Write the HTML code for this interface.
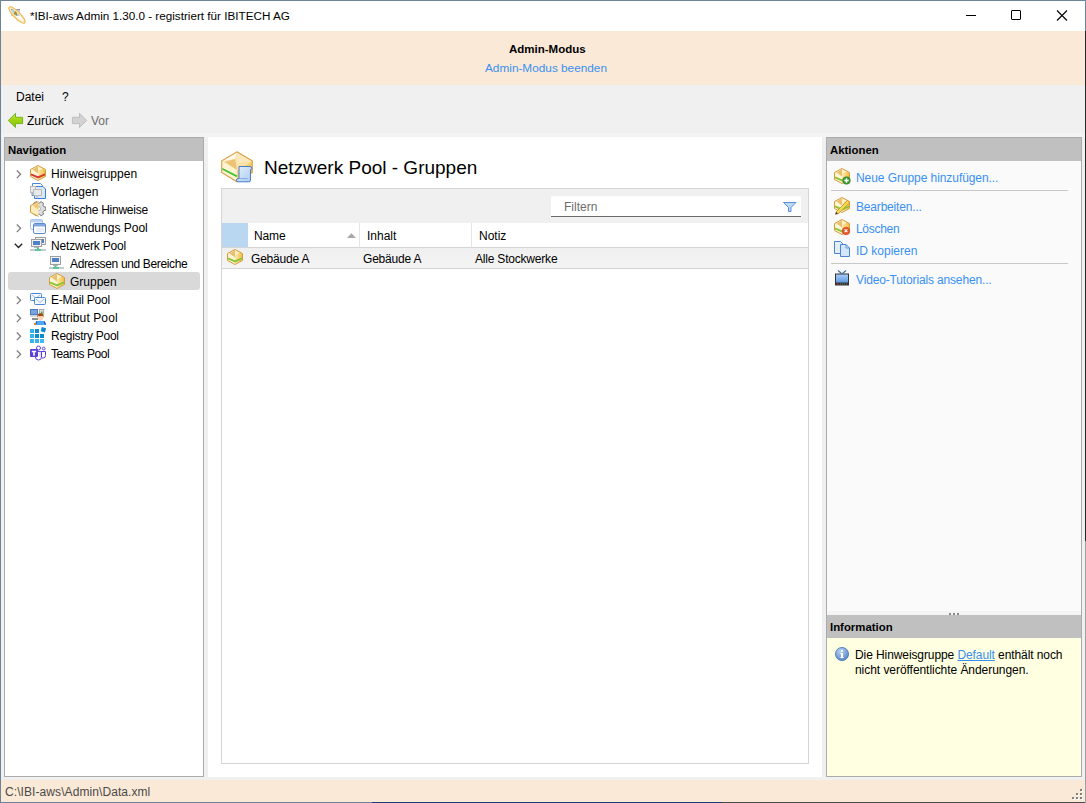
<!DOCTYPE html>
<html><head><meta charset="utf-8">
<style>
*{margin:0;padding:0;box-sizing:border-box}
html,body{width:1086px;height:803px;overflow:hidden;background:#f0f0f0;font-family:"Liberation Sans",sans-serif;font-size:12px;color:#000}
div,svg{position:absolute}
.t{white-space:nowrap;line-height:14px;height:14px}
.b{font-weight:bold}
.h{font-weight:bold;font-size:11.4px}
.lk{color:#3990f3}
.bx{background:#fff}
svg{overflow:visible}
</style></head><body>
<svg width="0" height="0" style="left:0;top:0">
<defs>
 <linearGradient id="gR" x1="0" y1="0" x2="1" y2="0"><stop offset="0" stop-color="#fde9b4"/><stop offset="1" stop-color="#f2bd3e"/></linearGradient>
 <linearGradient id="gBl" x1="0" y1="0" x2="0" y2="1"><stop offset="0" stop-color="#a9cdf5"/><stop offset="1" stop-color="#5f9be6"/></linearGradient>
 <linearGradient id="gGreen" x1="0" y1="0" x2="0" y2="1"><stop offset="0" stop-color="#c0e85a"/><stop offset=".5" stop-color="#9dd40c"/><stop offset="1" stop-color="#86c010"/></linearGradient>
 <radialGradient id="gInfo" cx=".4" cy=".3" r=".8"><stop offset="0" stop-color="#b9d2f0"/><stop offset="1" stop-color="#4b7fc4"/></radialGradient>
 <symbol id="boxb" viewBox="0 0 16 16">
  <path d="M8 .5 15.5 4.5V11.5L8 15.5 .5 11.5V4.5Z" fill="#fff6d8"/>
  <path d="M8 1 15.2 4.7V11.3L8 15.1V8.4Z" fill="url(#gR)"/>
  <path d="M2.5 4.6 8 1.2 8 8.4Z" fill="#e8c070"/>
  <path d="M8 1.2 13 3.8 8 6Z" fill="#fff1c8"/>
 </symbol>
 <symbol id="boxR" viewBox="0 0 16 16">
  <use href="#boxb"/>
  <path d="M1 9.3 8 12.5 15 9.3" fill="none" stroke="#d6392b" stroke-width="2"/>
  <path d="M8 .5 15.5 4.5V11.5L8 15.5 .5 11.5V4.5Z" fill="none" stroke="#d49b3b"/>
 </symbol>
 <symbol id="boxG" viewBox="0 0 16 16">
  <use href="#boxb"/>
  <path d="M1 9.3 8 12.5 15 9.3" fill="none" stroke="#8dc63a" stroke-width="2"/>
  <path d="M8 .5 15.5 4.5V11.5L8 15.5 .5 11.5V4.5Z" fill="none" stroke="#d49b3b"/>
 </symbol>
 <symbol id="vorl" viewBox="0 0 16 16">
  <path d="M2.5.5h8l2 2v10h-10.5z" fill="#f4f8fe" stroke="#4a86d4"/>
  <path d="M4.5 3.5h8.5l2.5 2.5v9.5h-11z" fill="#d9e9fb" stroke="#3d7ed2"/>
  <rect x=".5" y="3.5" width="5" height="6" fill="#ebebeb" stroke="#bcbcbc"/>
  <path d="M3.5 6.5h8v6h-3.5l-1 2v-2h-3.5z" fill="#e9e9e9" stroke="#b8b8b8"/>
 </symbol>
 <symbol id="stat" viewBox="0 0 16 16">
  <g transform="translate(.6 -.3)"><path d="M13.27 6.10 L15.21 6.34 L15.21 9.66 L13.27 9.90 L12.28 11.61 L13.05 13.41 L10.16 15.08 L8.98 13.51 L7.02 13.51 L5.84 15.08 L2.95 13.41 L3.72 11.61 L2.73 9.90 L0.79 9.66 L0.79 6.34 L2.73 6.10 L3.72 4.39 L2.95 2.59 L5.84 0.92 L7.02 2.49 L8.98 2.49 L10.16 0.92 L13.05 2.59 L12.28 4.39Z" fill="#dedede" stroke="#6e6e6e" stroke-width=".9"/>
  <circle cx="8" cy="8" r="2" fill="#fff" stroke="#8a8a8a" stroke-width=".6"/></g>
  <path d="M8.5 .6 .5 4.6V11.4L8.5 15.4Z" fill="#fcecc0"/>
  <path d="M8.5 1.5 3 4.6 8.5 9Z" fill="#f0c872"/>
  <path d="M8.5 .6 .5 4.6V11.4L8.5 15.4" fill="none" stroke="#d49b3b"/>
 </symbol>
 <symbol id="anw" viewBox="0 0 16 16">
  <rect x=".5" y=".5" width="12" height="10" rx="1.5" fill="#fff" stroke="#a8c4ea"/>
  <rect x="1" y="1" width="11" height="2.5" fill="#bdd3f1"/>
  <rect x="3.5" y="4.5" width="12" height="10" rx="1.5" fill="#fff" stroke="#5a89d0"/>
  <rect x="4" y="5" width="11" height="2.5" fill="#80a8e2"/>
  <rect x="6" y="9" width="8" height="4" fill="#e8eff9"/>
 </symbol>
 <symbol id="net" viewBox="0 0 16 16">
  <rect x="5.5" y=".5" width="10" height="7" fill="#f2f2f2" stroke="#a0a0a0"/>
  <rect x="11" y="2" width="3" height="4" fill="#4f80c8"/>
  <rect x="1.5" y="2.5" width="10" height="7" fill="#f2f2f2" stroke="#a0a0a0"/>
  <rect x="3" y="4" width="7" height="4" fill="#4f80c8"/>
  <rect x="4" y="10" width="5" height="1" fill="#b5b5b5"/>
  <rect x="7" y="10.5" width="2" height="2" fill="#4fc08d"/>
  <rect x="0" y="12" width="16" height="2" fill="#c5ccd1"/>
  <rect x="5" y="12" width="6" height="2" fill="#5bc595"/>
 </symbol>
 <symbol id="adr" viewBox="0 0 16 16">
  <rect x="1.5" y="1.5" width="10" height="8" fill="#f2f2f2" stroke="#a0a0a0"/>
  <rect x="3" y="3" width="7" height="4" fill="#4f80c8"/>
  <rect x="4" y="10" width="5" height="1" fill="#b5b5b5"/>
  <rect x="5.5" y="10.5" width="2" height="2" fill="#4fc08d"/>
  <rect x="0" y="12" width="15" height="2" fill="#c5ccd1"/>
  <rect x="4" y="12" width="6" height="2" fill="#5bc595"/>
 </symbol>
 <symbol id="mail" viewBox="0 0 16 16">
  <rect x=".5" y="2.5" width="11" height="7" rx=".8" fill="#f5f9ff" stroke="#4d88d6"/>
  <path d="M2 4 6 7 10 4" fill="none" stroke="#8fb3e4" stroke-width=".8"/>
  <rect x="4.5" y="6.5" width="11" height="7" rx=".8" fill="#f5f9ff" stroke="#4d88d6"/>
  <path d="M6 8 10 11.5 14 8" fill="none" stroke="#8fb3e4" stroke-width=".9"/>
 </symbol>
 <symbol id="attr" viewBox="0 0 16 16">
  <rect x="0" y="0" width="8" height="6" fill="#4a7bc4"/>
  <rect x="1" y="1" width="6" height="4" fill="#7ba4dc"/>
  <rect x="0" y="6" width="8" height="2" fill="#d8d8d8"/>
  <rect x="2" y="9" width="6" height="2" fill="#8c8c8c"/>
  <rect x="9.3" y=".3" width="4.5" height="5" fill="#dcdcdc" stroke="#8a8a8a" stroke-width=".6"/>
  <path d="M10.5 4.5 12 1.8 13 4.5Z" fill="#3fa23f"/>
  <path d="M5 16C5 12.5 7.5 11.8 10.5 11.8S16 12.5 16 16Z" fill="#4ea7f2"/>
  <path d="M5.5 15.5 7 12.2M15.5 15.5 14 12.2" stroke="#2747b8" stroke-width="1.1"/>
  <circle cx="10.5" cy="8.3" r="2.9" fill="#f7d6b5"/>
  <path d="M7.4 8.6C7 5.3 8.6 4.3 10.5 4.3S14 5.3 13.6 8.6L12.6 6.8 9.6 7.2 8.3 6.6Z" fill="#9a4a15"/>
  <rect x="4" y="14" width="2" height="2" fill="#e5852b"/>
 </symbol>
 <symbol id="reg" viewBox="0 0 16 16">
  <rect x="0" y="2" width="4" height="4" fill="#36b4ea"/>
  <rect x="5" y="2" width="4" height="4" fill="#0d8dd0"/>
  <rect x="0" y="7" width="4" height="4" fill="#36b4ea"/>
  <rect x="5" y="7" width="4" height="4" fill="#0d8dd0"/>
  <rect x="10" y="7" width="4" height="4" fill="#0d8dd0"/>
  <rect x="0" y="12" width="4" height="4" fill="#36b4ea"/>
  <rect x="5" y="12" width="4" height="4" fill="#36b4ea"/>
  <rect x="10" y="12" width="4" height="4" fill="#3dbcee"/>
  <rect x="11.2" y=".6" width="4.4" height="4.4" fill="#0b8ace" transform="rotate(15 13.4 2.8)"/>
 </symbol>
 <symbol id="teams" viewBox="0 0 16 16">
  <path d="M11 6.5h4.5v4.2a2.3 2.3 0 0 1-2.3 2.3H12" fill="none" stroke="#5b3fd9"/>
  <path d="M5.5 6.5h6v5.5a3 3 0 0 1-6 0z" fill="#fff" stroke="#5b3fd9"/>
  <path d="M10 6.7v5" stroke="#c9bdf2" stroke-width="1"/>
  <circle cx="8.5" cy="3" r="2" fill="#fff" stroke="#5b3fd9"/>
  <circle cx="13.7" cy="3.5" r="1.4" fill="#fff" stroke="#5b3fd9"/>
  <rect x="0" y="4" width="8" height="8" rx="1" fill="#5b3fd9"/>
  <path d="M1.8 5.8h4.4v1.5H4.8v3.5H3.2V7.3H1.8z" fill="#fff"/>
 </symbol>
 <symbol id="copy" viewBox="0 0 16 16">
  <path d="M.5 .5h6l3 3v9h-9z" fill="#e3eefb" stroke="#4a86d4"/>
  <path d="M6.5 3.5h5.5l3.5 3.5v8.5h-9z" fill="#d6e6fa" stroke="#4a86d4"/>
  <path d="M12 3.5V7h3.5" fill="none" stroke="#4a86d4" stroke-width=".8"/>
 </symbol>
 <symbol id="tv" viewBox="0 0 16 16">
  <path d="M4 .5 7.5 3.5M12 .5 8.5 3.5" stroke="#3b6ea0" stroke-width="1.1"/>
  <rect x="1" y="3.5" width="14" height="12" fill="#333"/>
  <rect x="2" y="4.5" width="12" height="8" fill="url(#gBl)"/>
  <rect x="3" y="13.5" width="1.5" height="1" fill="#e33"/>
  <path d="M6 14h1M8 14h1M10 14h1M12 14h1" stroke="#777" stroke-width="1"/>
 </symbol>
</defs>
</svg>

<!-- window frame -->
<div style="left:0;top:0;width:1086px;height:1px;background:#6c8499"></div>
<div style="left:0;top:0;width:1px;height:803px;background:#6c8499"></div>
<div style="left:0;top:802px;width:372px;height:1px;background:#6c8499"></div>
<div style="left:372px;top:802px;width:350px;height:1px;background:#1f3d72"></div>
<div style="left:722px;top:802px;width:364px;height:1px;background:#4a4a4a"></div>
<div style="left:1085px;top:0;width:1px;height:31px;background:#6c8499"></div>
<div style="left:1085px;top:31px;width:1px;height:510px;background:#262626"></div>
<div style="left:1085px;top:541px;width:1px;height:262px;background:#a0a0a0"></div>
<!-- title bar -->
<div style="left:1px;top:1px;width:1084px;height:30px;background:#fff"></div>
<div class="t" style="left:30px;top:9px;font-size:11.7px">*IBI-aws Admin 1.30.0 - registriert für IBITECH AG</div>
<!-- window controls -->
<div style="left:966px;top:15px;width:10px;height:1px;background:#000"></div>
<div style="left:1011px;top:10px;width:10px;height:10px;border:1px solid #000;border-radius:1px"></div>
<svg style="left:1056px;top:10px" width="12" height="11" viewBox="0 0 12 11"><path d="M1 0.5L11 10.5M11 0.5L1 10.5" stroke="#000" stroke-width="1.1"/></svg>
<!-- banner -->
<div style="left:1px;top:31px;width:1084px;height:54px;background:#fae9d6"></div>
<div class="t b" style="left:509px;top:42px;font-size:11.5px">Admin-Modus</div>
<div class="t lk" style="left:485px;top:61px;font-size:11.8px">Admin-Modus beenden</div>
<!-- menu / toolbar -->
<div class="t" style="left:16px;top:90px">Datei</div>
<div class="t" style="left:62px;top:90px">?</div>
<div class="t" style="left:27px;top:114px">Zurück</div>
<div class="t" style="left:91px;top:114px;color:#6d6d6d">Vor</div>

<div style="left:1px;top:133px;width:1084px;height:4px;background:#f3f3f3"></div>
<!-- left panel -->
<div style="left:4px;top:137px;width:200px;height:640px;border:1px solid #ababab;background:#fff"></div>
<div style="left:5px;top:138px;width:198px;height:23px;background:#c0c0c0"></div>
<div class="t h" style="left:8px;top:143px">Navigation</div>


<!-- nav items -->
<div class="t" style="left:51px;top:167px">Hinweisgruppen</div>
<div class="t" style="left:51px;top:185px">Vorlagen</div>
<div class="t" style="left:51px;top:203px;letter-spacing:-0.25px">Statische Hinweise</div>
<div class="t" style="left:51px;top:221px">Anwendungs Pool</div>
<div class="t" style="left:51px;top:239px;letter-spacing:-0.18px">Netzwerk Pool</div>
<div class="t" style="left:70px;top:257px;letter-spacing:-0.35px">Adressen und Bereiche</div>
<div style="left:8px;top:272px;width:192px;height:18px;background:#d9d9d9;border-radius:3px"></div>
<div class="t" style="left:70px;top:275px">Gruppen</div>
<div class="t" style="left:51px;top:293px;letter-spacing:-0.23px">E-Mail Pool</div>
<div class="t" style="left:51px;top:311px;letter-spacing:0.1px">Attribut Pool</div>
<div class="t" style="left:51px;top:329px;letter-spacing:-0.28px">Registry Pool</div>
<div class="t" style="left:51px;top:347px;letter-spacing:-0.44px">Teams Pool</div>

<!-- title icon -->
<svg style="left:6px;top:4px" width="22" height="22" viewBox="0 0 22 22">
 <rect x="5" y="5" width="9" height="7" fill="#b7d3f0"/><rect x="5" y="5" width="9" height="1" fill="#7d98b4"/>
 <path d="M8.2 11.5 9.5 7 10.8 11.5M8.8 10h1.6" fill="none" stroke="#a88a10" stroke-width="1.2"/>
 <ellipse cx="11" cy="11" rx="10.2" ry="2.6" transform="rotate(45 11 11)" fill="none" stroke="#fbe6b8" stroke-width="2"/>
 <ellipse cx="11" cy="11" rx="11" ry="3.3" transform="rotate(45 11 11)" fill="none" stroke="#efb84c" stroke-width="1"/>
</svg>
<!-- toolbar arrows -->
<svg style="left:0;top:100px" width="100" height="40" viewBox="0 100 100 40">
 <path d="M8.3 120.5 15.5 113.3V117.3H22.6V123.6H15.5V127.5Z" fill="url(#gGreen)" stroke="#6eae18" stroke-width=".9"/>
 <path d="M86.7 120.5 79.5 113.3V117.3H72.4V123.6H79.5V127.5Z" fill="#d2d2d2" stroke="#b9b9b9" stroke-width=".9"/>
</svg>
<!-- nav chevrons & icons -->
<svg style="left:0;top:160px" width="200" height="210" viewBox="0 160 200 210">
 <g fill="none" stroke="#808080" stroke-width="1.3">
  <path d="M16.8 170.5 20.6 174.3 16.8 178.1"/>
  <path d="M16.8 224.5 20.6 228.3 16.8 232.1"/>
  <path d="M16.8 296.5 20.6 300.3 16.8 304.1"/>
  <path d="M16.8 314.5 20.6 318.3 16.8 322.1"/>
  <path d="M16.8 332.5 20.6 336.3 16.8 340.1"/>
  <path d="M16.8 350.5 20.6 354.3 16.8 358.1"/>
 </g>
 <path d="M14.8 243.8 18.5 247.5 22.2 243.8" fill="none" stroke="#1e1e1e" stroke-width="1.3"/>
 <use href="#boxR" x="30" y="165" width="16" height="16"/>
 <use href="#vorl" x="30" y="183" width="16" height="16"/>
 <use href="#stat" x="30" y="201" width="16" height="16"/>
 <use href="#anw" x="30" y="219" width="16" height="16"/>
 <use href="#net" x="30" y="237" width="16" height="16"/>
 <use href="#adr" x="49" y="255" width="16" height="16"/>
 <use href="#boxG" x="49" y="273" width="16" height="16"/>
 <use href="#mail" x="30" y="291" width="16" height="16"/>
 <use href="#attr" x="30" y="309" width="16" height="16"/>
 <use href="#reg" x="30" y="327" width="16" height="16"/>
 <use href="#teams" x="30" y="345" width="16" height="16"/>
</svg>


<!-- center panel -->
<div style="left:208px;top:137px;width:614px;height:640px;background:#fff"></div>


<div class="t" style="left:264px;top:157px;font-size:19px;line-height:22px;height:22px">Netzwerk Pool - Gruppen</div>
<!-- grid -->
<div style="left:221px;top:188px;width:588px;height:576px;border:1px solid #d5d5d5;background:#fff"></div>
<div style="left:222px;top:189px;width:586px;height:34px;background:#f0f0f0"></div>
<div style="left:551px;top:196px;width:250px;height:21px;background:#fff;border-bottom:1px solid #6b6b6b;border-radius:2px 2px 0 0"></div>
<div class="t" style="left:564px;top:200px;color:#6d6d6d">Filtern</div>
<div style="left:222px;top:223px;width:26px;height:24px;background:#b9d7f0"></div>
<div style="left:359px;top:223px;width:1px;height:24px;background:#e5e5e5"></div>
<div style="left:471px;top:223px;width:1px;height:24px;background:#e5e5e5"></div>
<div style="left:222px;top:247px;width:586px;height:1px;background:#d5d5d5"></div>
<div class="t" style="left:254px;top:229px;letter-spacing:-0.15px">Name</div>
<div class="t" style="left:367px;top:229px">Inhalt</div>
<div class="t" style="left:479px;top:229px">Notiz</div>
<svg style="left:347px;top:233px" width="9" height="5" viewBox="0 0 9 5"><path d="M0 5L4.5 0.3L9 5Z" fill="#a8a8a8"/></svg>
<div style="left:222px;top:248px;width:586px;height:20px;background:linear-gradient(#efefef,#f5f5f5)"></div>
<div style="left:222px;top:268px;width:586px;height:1px;background:#d5d5d5"></div>
<div class="t" style="left:251px;top:252px;letter-spacing:-0.2px">Gebäude A</div>
<div class="t" style="left:363px;top:252px;letter-spacing:-0.2px">Gebäude A</div>
<div class="t" style="left:475px;top:252px;letter-spacing:-0.2px">Alle Stockwerke</div>

<!-- center title icon -->
<svg style="left:221px;top:151px" width="32" height="32" viewBox="0 0 32 32">
 <defs><linearGradient id="gRF" x1="0" y1="0" x2="1" y2="1"><stop offset="0" stop-color="#fae3a0"/><stop offset="1" stop-color="#f2b935"/></linearGradient>
 <linearGradient id="gPg" x1="0" y1="0" x2="1" y2="1"><stop offset="0" stop-color="#e6f0fc"/><stop offset="1" stop-color="#a9c9f0"/></linearGradient></defs>
 <path d="M1 10 16 19V30.5L1 21.5Z" fill="#fff3d2"/>
 <path d="M16 19 31 10V21.5L16 30.5Z" fill="url(#gRF)"/>
 <path d="M1 10 16 1 31 10 16 19Z" fill="#f8e2a8"/>
 <path d="M1.5 10 16 1.5 14 8Z" fill="#fff8e6"/>
 <path d="M4 11 14 8 16 19Z" fill="#ecc274"/>
 <path d="M16 1.5 30 10 16 12Z" fill="#fbe9bd"/>
 <path d="M1.2 17.8 16 25.4" stroke="#45c43a" stroke-width="1.8"/>
 <path d="M16 .8 31.3 9.8V21.5L16 30.8 .7 21.5V9.8Z" fill="none" stroke="#d5a045" stroke-width="1.1"/>
 <path d="M18 15.5h11a1.8 1.8 0 0 1 1.8 1.8v.2a1.2 1.2 0 0 1-1.3 1.2V29.2a1.6 1.6 0 0 1-1.6 1.6H17a1.6 1.6 0 0 1 0-3.2h1Z" fill="url(#gPg)" stroke="#3a70c4" stroke-width=".9"/>
 <path d="M17 27.6h9.5" stroke="#6a98d8" stroke-width=".7"/>
</svg>
<!-- grid row icon, filter icon -->
<svg style="left:227px;top:249px" width="16" height="16" viewBox="0 0 16 16"><use href="#boxG"/></svg>
<svg style="left:783px;top:202px" width="14" height="10" viewBox="0 0 14 10">
 <path d="M.5 .5h12.5L8 5.5V9.5H5.5V5.5Z" fill="#bcd8f5" stroke="#4a86d4" stroke-width=".9"/>
</svg>


<!-- right panel -->
<div style="left:826px;top:137px;width:256px;height:640px;border:1px solid #ababab;background:#fafafa"></div>
<div style="left:827px;top:138px;width:254px;height:23px;background:#c0c0c0"></div>
<div class="t h" style="left:830px;top:143px">Aktionen</div>

<div class="t lk" style="left:856px;top:171px;letter-spacing:-0.07px">Neue Gruppe hinzufügen...</div>
<div style="left:831px;top:190px;width:237px;height:1px;background:#c8c8c8"></div>
<div class="t lk" style="left:856px;top:200px;letter-spacing:-0.18px">Bearbeiten...</div>
<div class="t lk" style="left:856px;top:222px;letter-spacing:-0.3px">Löschen</div>
<div class="t lk" style="left:856px;top:244px">ID kopieren</div>
<div style="left:831px;top:263px;width:237px;height:1px;background:#c8c8c8"></div>
<div class="t lk" style="left:856px;top:273px;letter-spacing:-0.15px">Video-Tutorials ansehen...</div>

<svg style="left:826px;top:160px" width="30" height="130" viewBox="826 160 30 130">
 <use href="#boxG" x="834" y="168" width="16" height="16"/>
 <circle cx="846.5" cy="180.5" r="3.8" fill="#3f9a34" stroke="#2f7a28" stroke-width=".6"/>
 <path d="M846.5 178.3v4.4M844.3 180.5h4.4" stroke="#fff" stroke-width="1.4"/>
 <use href="#boxG" x="834" y="197" width="16" height="16"/>
 <path d="M836 212 847.5 200.5 849.5 202.5 838 214Z" fill="#f2dc4a" stroke="#c88a3a" stroke-width=".8"/>
 <path d="M835 214.5 836 212 838 214Z" fill="#3a2a10"/>
 <use href="#boxG" x="834" y="219" width="16" height="16"/>
 <circle cx="846" cy="231" r="3.8" fill="#e8572b" stroke="#c8401a" stroke-width=".6"/>
 <path d="M844.6 229.4l2.8 2.8M847.4 229.4l-2.8 2.8" stroke="#fff" stroke-width="1.1"/>
 <use href="#copy" x="834" y="241" width="16" height="16"/>
 <use href="#tv" x="834" y="270" width="16" height="16"/>
</svg>

<div style="left:827px;top:611px;width:254px;height:4px;background:#f4f4f4"></div>
<div style="left:827px;top:615px;width:254px;height:23px;background:#c0c0c0"></div>
<div class="t h" style="left:830px;top:620px">Information</div>
<div style="left:827px;top:638px;width:254px;height:138px;background:#ffffe1"></div>


<div class="t" style="left:855px;top:648px;letter-spacing:-0.09px">Die Hinweisgruppe <span class="lk" style="text-decoration:underline">Default</span> enthält noch</div>
<div class="t" style="left:855px;top:663px;letter-spacing:-0.05px">nicht veröffentlichte Änderungen.</div>

<svg style="left:835px;top:647px" width="14" height="14" viewBox="0 0 14 14">
 <circle cx="7" cy="7" r="6.6" fill="url(#gInfo)" stroke="#4a78b8" stroke-width=".8"/>
 <rect x="6" y="6" width="2" height="4.5" fill="#fff"/><rect x="5.3" y="10" width="3.4" height="1" fill="#fff"/><rect x="5.3" y="6" width="1.2" height="1" fill="#fff"/>
 <circle cx="7" cy="3.9" r="1.1" fill="#fff"/>
</svg>
<div style="left:949px;top:613px;width:2px;height:2px;background:#8a8a8a"></div>
<div style="left:953px;top:613px;width:2px;height:2px;background:#8a8a8a"></div>
<div style="left:957px;top:613px;width:2px;height:2px;background:#8a8a8a"></div>

<!-- status bar -->
<div style="left:1px;top:780px;width:1084px;height:22px;background:#fae9d6"></div>
<div class="t" style="left:5px;top:785px;color:#4a4a4a;font-size:12px;letter-spacing:0.08px">C:\IBI-aws\Admin\Data.xml</div>

<svg style="left:1069px;top:785px" width="14" height="14" viewBox="1070 786 14 14">
 <g fill="#fff"><rect x="1082" y="791" width="2" height="2"/><rect x="1078" y="795" width="2" height="2"/><rect x="1082" y="795" width="2" height="2"/><rect x="1074" y="799" width="2" height="2"/><rect x="1078" y="799" width="2" height="2"/><rect x="1082" y="799" width="2" height="2"/></g>
 <g fill="#808080"><rect x="1081" y="790" width="2" height="2"/><rect x="1077" y="794" width="2" height="2"/><rect x="1081" y="794" width="2" height="2"/><rect x="1073" y="798" width="2" height="2"/><rect x="1077" y="798" width="2" height="2"/><rect x="1081" y="798" width="2" height="2"/></g>
</svg>
</body></html>
